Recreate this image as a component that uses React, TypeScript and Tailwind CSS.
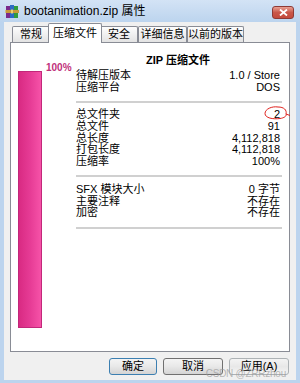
import React from "react";

const FONT = { fontFamily: '"Liberation Sans", "Noto Sans CJK SC", sans-serif' };

function RarIcon() {
  return (
    <svg width="15" height="15" viewBox="0 0 15 15" className="shrink-0">
      <rect x="1" y="2" width="4" height="12" fill="#7a2a8c" />
      <rect x="5" y="1" width="4" height="13" fill="#2c6bc4" />
      <rect x="9" y="2" width="4" height="12" fill="#2f9b3c" />
      <rect x="0.5" y="6" width="13.5" height="3" fill="#c89a3a" />
      <rect x="6" y="5.5" width="2" height="4" fill="#e8d070" />
    </svg>
  );
}

function Tab({ label, active, w }: { label: string; active?: boolean; w: string }) {
  return (
    <div
      className={
        "flex items-center justify-center whitespace-nowrap border border-[#898c95] border-b-0 text-[11px] text-black " +
        w +
        (active
          ? " bg-white h-[20px] -mx-[2px] z-10 relative -mb-px rounded-t-[2px]"
          : " h-[16px] bg-gradient-to-b from-[#fdfdfd] to-[#e3e3e3] rounded-t-[2px]")
      }
    >
      {label}
    </div>
  );
}

function Row({ k, v }: { k: string; v: string }) {
  return (
    <div className="flex justify-between h-[11.7px] leading-[11.7px]">
      <span>{k}</span>
      <span>{v}</span>
    </div>
  );
}

function Btn({ label, primary, disabled }: { label: string; primary?: boolean; disabled?: boolean }) {
  return (
    <div
      className={
        "h-[17px] flex items-center justify-center rounded-[3px] border text-[11px] bg-gradient-to-b from-[#f4f4f4] via-[#e8e8e8] to-[#d4d4d4] " +
        (primary ? "w-[48px] border-[#3c7fb1] text-black" : "w-[60px] border-[#707070] text-black") +
        (disabled ? " !border-[#adb2b5] text-[#8d8d8d] from-[#f4f4f4] to-[#f4f4f4]" : "")
      }
    >
      {label}
    </div>
  );
}

export default function App() {
  return (
    <div style={FONT} className="w-[300px] h-[383px] overflow-hidden bg-[#bcd4ee] flex flex-col select-none">
      {/* Title bar */}
      <div className="h-[22px] flex items-center pl-[5px] pr-[6px] bg-gradient-to-b from-[#d3e3f5] to-[#bcd4ee]">
        <RarIcon />
        <span className="ml-[4px] text-[12px] text-black">bootanimation.zip 属性</span>
        <div className="ml-auto mt-[3px] w-[22px] h-[13px] rounded-[3px] border border-[#8e3a35] bg-gradient-to-b from-[#e8a093] via-[#c9574a] to-[#c44a3c] flex items-center justify-center">
          <svg width="9" height="7" viewBox="0 0 9 7">
            <path d="M1 0.5 L8 6.5 M8 0.5 L1 6.5" stroke="white" strokeWidth="1.8" />
          </svg>
        </div>
      </div>

      {/* Body */}
      <div className="mx-[4px] mb-[3px] flex-1 bg-[#f0f0f0] flex flex-col px-[6px] pt-[1px]">
        {/* Tabs */}
        <div className="flex items-end h-[19px] pl-[2px]">
          <Tab label="常规" w="w-[38px]" />
          <Tab label="压缩文件" active w="w-[54px]" />
          <Tab label="安全" w="w-[38px]" />
          <Tab label="详细信息" w="w-[49px]" />
          <Tab label="以前的版本" w="w-[57px]" />
        </div>

        {/* Panel */}
        <div className="h-[310px] bg-white border border-[#898c95] flex text-[11px] text-black">
          {/* Bar column */}
          <div className="w-[65px] pl-[7px] pt-[28px] shrink-0">
            <div className="relative w-[24px] h-[257px] border border-[#c2277a] bg-gradient-to-r from-[#d92a83] via-[#e63b95] to-[#f652a8]">
              <span className="absolute left-[27px] -top-[9px] text-[10px] font-bold text-[#c0307a] leading-none">100%</span>
            </div>
          </div>

          {/* Info column */}
          <div className="flex-1 pr-[9px] pt-[11px] relative">
            <div className="text-center font-bold text-[11px] leading-[12px] h-[13px]">ZIP 压缩文件</div>
            <div className="mt-[3px]">
              <Row k="待解压版本" v="1.0 / Store" />
              <Row k="压缩平台" v="DOS" />
            </div>
            <div className="h-[2px] bg-[#d0d0d0] mt-[8px] -mr-[2px]" />
            <div className="mt-[6px]">
              <Row k="总文件夹" v="2" />
              <Row k="总文件" v="91" />
              <Row k="总长度" v="4,112,818" />
              <Row k="打包长度" v="4,112,818" />
              <Row k="压缩率" v="100%" />
            </div>
            <div className="h-[2px] bg-[#d0d0d0] mt-[7px] -mr-[2px]" />
            <div className="mt-[7px]">
              <Row k="SFX 模块大小" v="0 字节" />
              <Row k="主要注释" v="不存在" />
              <Row k="加密" v="不存在" />
            </div>
            <div className="h-[2px] bg-[#d0d0d0] mt-[8px] -mr-[2px]" />

            {/* hand-drawn red mark around the folder count */}
            <svg className="absolute right-[-3px] top-[62px]" width="30" height="16" viewBox="0 0 30 16">
              <path
                d="M16 2 C10 1 3 4 3 8.5 C3 13 11 14.5 18 13.5 C22 13 25 11 24 9 L28 10.5 M24 9 C25 5 22 2 16 2"
                fill="none"
                stroke="#e0201c"
                strokeWidth="1"
              />
            </svg>
          </div>
        </div>

        {/* Buttons */}
        <div className="flex justify-end gap-[6px] mt-[6px] pr-[1px] relative">
          <Btn label="确定" primary />
          <Btn label="取消" />
          <Btn label="应用(A)" disabled />
          <span className="absolute right-[4px] top-[8px] text-[10px] text-[#9a9a9a]/70 tracking-tight">CSDN @ZRRzhou</span>
        </div>
      </div>
    </div>
  );
}
